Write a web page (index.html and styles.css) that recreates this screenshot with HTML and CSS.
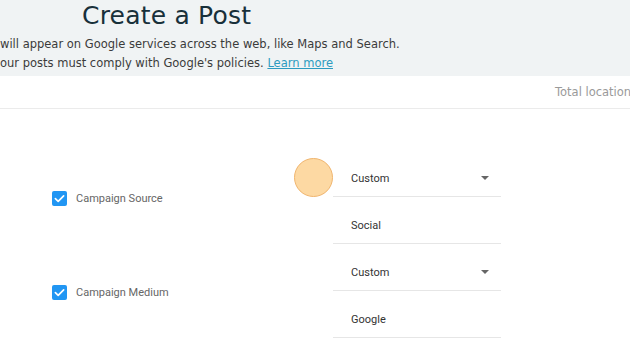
FILE: index.html
```html
<!DOCTYPE html>
<html lang="en">
<head>
  <meta charset="UTF-8" />
  <meta name="viewport" content="width=device-width, initial-scale=1.0"/>
  <title>Create a Post</title>
  <link rel="stylesheet" href="styles.css">
</head>
<body>
  <div class="header">
    <h1 class="title">Create a Post</h1>
    <p class="intro">will appear on Google services across the web, like Maps and Search.</p>
    <p class="intro">our posts must comply with Google's policies. <a href="#">Learn more</a></p>
  </div>

  <div class="toolbar">
    <span class="total">Total locations</span>
  </div>

  <div class="form">
    <div class="group">
      <label class="check">
        <span class="box"><svg viewBox="0 0 16 16"><path d="M3.6 8.2 L6.6 11 L12.4 5.2" /></svg></span>
        Campaign Source
      </label>
      <div class="fields">
        <div class="field select">Custom<span class="arrow"></span></div>
        <div class="field">Social</div>
      </div>
    </div>

    <div class="group">
      <label class="check">
        <span class="box"><svg viewBox="0 0 16 16"><path d="M3.6 8.2 L6.6 11 L12.4 5.2" /></svg></span>
        Campaign Medium
      </label>
      <div class="fields">
        <div class="field select">Custom<span class="arrow"></span></div>
        <div class="field">Google</div>
      </div>
    </div>
  </div>

  <div class="click-dot"></div>
</body>
</html>
```

FILE: styles.css
```css
* {
  box-sizing: border-box;
}

body {
  margin: 0;
  width: 630px;
  height: 354px;
  overflow: hidden;
  background: #fff;
  font-family: 'DejaVu Sans', sans-serif;
  color: #333;
}

.header {
  background: #f0f3f4;
  height: 76px;
}

.title {
  margin: 0 0 4px 82px;
  font-size: 25px;
  font-weight: normal;
  color: #18303a;
  line-height: 31px;
  letter-spacing: 0.2px;
}

.intro {
  margin: 0;
  font-size: 11.5px;
  line-height: 19px;
  color: #3b3b3b;
  white-space: nowrap;
}

.intro a {
  color: #2d9bc0;
}

.toolbar {
  height: 33px;
  border-bottom: 1px solid #ebebeb;
  display: flex;
  align-items: center;
  white-space: nowrap;
  overflow: hidden;
}

.total {
  margin-left: 555px;
  font-size: 11.5px;
  color: #9a9a9a;
}

.form {
  padding-top: 41px;
  font-family: Roboto, sans-serif;
  font-size: 11px;
}

.group {
  display: flex;
  align-items: center;
}

.check {
  width: 333px;
  padding-left: 52px;
  display: flex;
  align-items: center;
  gap: 9px;
  color: #666;
  margin-top: 2px;
}

.box {
  width: 15px;
  height: 15px;
  border-radius: 2px;
  background: #2196f3;
  display: flex;
}

.box svg {
  width: 15px;
  height: 15px;
}

.box path {
  fill: none;
  stroke: #fff;
  stroke-width: 1.8;
  stroke-linecap: round;
  stroke-linejoin: round;
}

.fields {
  width: 168px;
}

.field {
  height: 47px;
  padding: 10px 18px 0;
  border-bottom: 1px solid #e6e6e6;
  display: flex;
  align-items: center;
  justify-content: space-between;
  color: #333;
}

.arrow {
  width: 0;
  height: 0;
  margin-right: -6px;
  border-left: 4px solid transparent;
  border-right: 4px solid transparent;
  border-top: 4px solid #666;
}

.click-dot {
  position: absolute;
  left: 294px;
  top: 158px;
  width: 39px;
  height: 39px;
  border-radius: 50%;
  background: #fdd9a3;
  border: 1px solid #f0b56e;
}
```
